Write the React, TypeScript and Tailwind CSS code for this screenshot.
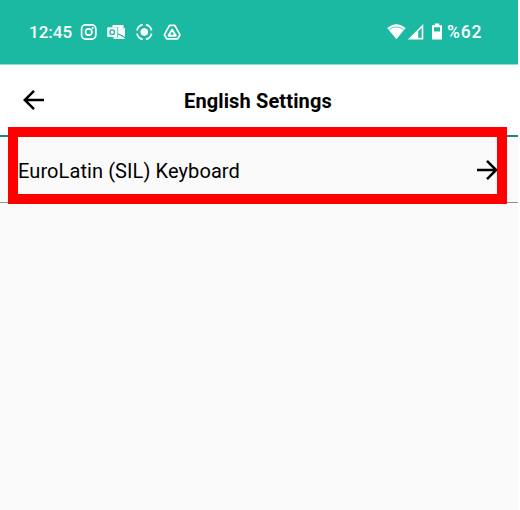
const ICON = "shrink-0 block";

function StatusBar() {
  return (
    <header className="flex h-[65px] shrink-0 items-start border-b border-[#8edfd2] bg-[#1bb9a2] pt-[20px] pl-[29px] text-white">
      <span className="w-[51px] whitespace-nowrap font-['Roboto',sans-serif] text-[17px] leading-6 font-medium">12:45</span>
      <svg className={ICON} width="18" height="24" viewBox="80 20 18 24" fill="none" stroke="white">
        <rect x="81.6" y="24.9" width="14.2" height="14.2" rx="4" strokeWidth="1.7" />
        <circle cx="88.7" cy="32" r="3.2" strokeWidth="1.7" />
        <circle cx="92.7" cy="28.1" r="1" fill="white" stroke="none" />
      </svg>
      <svg className="ml-[8px] block shrink-0" width="22" height="24" viewBox="106 20 22 24">
        <path d="M112.5 25H123.5V28.2L118.2 31.5V27.3H112.5Z" fill="white" />
        <path d="M118.2 31.3L125 27.8V36.8L118.2 33.2Z" fill="white" />
        <path d="M113.5 37.2H118.2V34.5L124.6 38V39H113.5Z" fill="white" />
        <rect x="107.2" y="27.3" width="10.2" height="9.8" rx="1" fill="white" />
        <circle cx="112.2" cy="32.2" r="2.3" fill="none" stroke="#1bb9a2" strokeWidth="1.4" />
      </svg>
      <svg className="ml-[7px] block shrink-0" width="19" height="24" viewBox="135 20 19 24" fill="none" stroke="white" strokeWidth="1.7">
        <circle cx="144.3" cy="32" r="3.8" fill="white" stroke="none" />
        <path d="M142.8 24.7A7.4 7.4 0 0 0 137 30.5M145.8 24.7A7.4 7.4 0 0 1 151.6 30.5M137 33.5A7.4 7.4 0 0 0 142.8 39.3M151.6 33.5A7.4 7.4 0 0 1 145.8 39.3" />
      </svg>
      <svg className="ml-[8px] block shrink-0" width="20" height="24" viewBox="162 20 20 24" fill="none" stroke="white" strokeWidth="1.7" strokeLinejoin="round">
        <path d="M169.5 25.4H174.8L180 34.8L177.6 38.9H166.7L164.3 34.8Z" />
        <path d="M172.15 29.5L175.8 35.7H168.5Z" strokeWidth="1.9" />
      </svg>
      <svg className="ml-[204px] block shrink-0" width="58" height="24" viewBox="386 20 58 24">
        <path d="M387.2 28.1Q396.4 20.4 405.6 28.1L396.4 39.3Z" fill="white" />
        <path d="M389.3 29.6Q396.4 24.1 403.5 29.6" fill="none" stroke="#1bb9a2" strokeWidth="0.7" />
        <path d="M407.8 39.4L423.3 24V39.4ZM418.2 31.3V37.8H421.7V27.8Z" fill="white" fillRule="evenodd" />
        <path d="M434.8 23.5H439.2V25.2H442V39.5H432V25.2H434.8ZM434 27.2V31.5H440V27.2Z" fill="white" fillRule="evenodd" />
      </svg>
      <span className="ml-[3px] whitespace-nowrap font-['Roboto',sans-serif] text-[17.5px] leading-6 font-medium tracking-[0.8px]">%62</span>
    </header>
  );
}

function Arrow({ right = false }: { right?: boolean }) {
  return (
    <svg className={right ? "block shrink-0 rotate-180" : "block shrink-0"} width="22" height="22" viewBox="0 0 22 22" fill="none" stroke="black" strokeWidth="2.5">
      <path d="M21 11H2M11 1.8L1.8 11L11 20.2" />
    </svg>
  );
}

export default function App() {
  return (
    <div className="h-[510px] w-[520px] overflow-hidden bg-white font-['Roboto',sans-serif] text-black">
      <main className="relative flex h-[510px] w-[518px] flex-col bg-[#fafafa]">
        <StatusBar />
        <div className="flex h-[72px] shrink-0 items-center border-b-2 border-[#17897a] bg-white pl-[23px]">
          <Arrow />
          <h1 className="ml-[139px] pt-[2px] text-[20px] leading-6 font-bold tracking-[0.13px] whitespace-nowrap">English Settings</h1>
        </div>
        <div className="flex h-[66px] shrink-0 items-center justify-between border-b border-[#929292] pr-[20px] pl-[18px]">
          <span className="pt-[3px] text-[20px] leading-6 tracking-[0.09px] whitespace-nowrap">EuroLatin (SIL) Keyboard</span>
          <Arrow right />
        </div>
        <div className="pointer-events-none absolute top-[127px] left-[8px] h-[77px] w-[499px] border-[10px] border-[#ff0000]" />
      </main>
    </div>
  );
}
